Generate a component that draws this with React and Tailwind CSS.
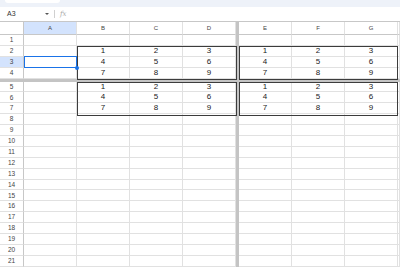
import React from "react";

const cols = ["A", "B", "C", "D", "|", "E", "F", "G", "H"];
const values = { 2: [1, 2, 3], 3: [4, 5, 6], 4: [7, 8, 9], 5: [1, 2, 3], 6: [4, 5, 6], 7: [7, 8, 9] };

function cellValue(row, col) {
  const vals = values[row];
  if (!vals) return "";
  const map = { B: 0, C: 1, D: 2, E: 0, F: 1, G: 2 };
  return map[col] === undefined ? "" : vals[map[col]];
}

function Row({ n }) {
  const selected = n === 3;
  return (
    <div className="flex h-[10.9px]">
      <div
        className={`w-[24px] shrink-0 flex items-center justify-center border-r border-b border-r-[#c7c7c7] border-b-[#e1e1e1] text-[6.5px] text-[#444] ${
          selected ? "bg-[#d3e3fd]" : "bg-white"
        }`}
      >
        {n}
      </div>
      {cols.map((c) =>
        c === "|" ? (
          <div key={c} className="w-[3px] shrink-0 bg-[#c4c4c4]" />
        ) : (
          <div
            key={c}
            className={`${c === "H" ? "flex-1" : "w-[53px] shrink-0"} flex items-center justify-center border-r border-b border-[#e1e1e1] text-[8px] text-[#222]`}
          >
            {cellValue(n, c)}
          </div>
        )
      )}
    </div>
  );
}

export default function App() {
  const topRows = [1, 2, 3, 4];
  const bottomRows = Array.from({ length: 17 }, (_, i) => i + 5);

  return (
    <div className="w-[400px] h-[271px] overflow-hidden bg-white font-['Liberation_Sans',Arial,sans-serif]">
      {/* toolbar strip */}
      <div className="h-[7px] bg-[#eef2f9] px-[5px]">
        <div className="w-[55px] h-[3px] bg-white rounded-b-[3px]" />
      </div>

      {/* formula bar */}
      <div className="h-[15px] flex items-center bg-white border-b border-[#c7c7c7]">
        <div className="w-[52px] pl-[7px] flex items-center justify-between pr-[3px]">
          <span className="text-[7px] text-[#333]">A3</span>
          <span className="w-0 h-0 border-l-[2px] border-r-[2px] border-t-[2px] border-l-transparent border-r-transparent border-t-[#555]" />
        </div>
        <div className="w-px h-[8px] bg-[#d0d0d0] ml-[2px]" />
        <span className="ml-[5px] text-[7px] italic text-[#aaa] font-['DejaVu_Serif',serif]">fx</span>
      </div>

      {/* grid */}
      <div className="relative">
        <div className="flex h-[13px]">
          <div className="w-[24px] shrink-0 border-r border-b border-[#c7c7c7] bg-white" />
          {cols.map((c) =>
            c === "|" ? (
              <div key={c} className="w-[3px] shrink-0 bg-[#c4c4c4]" />
            ) : (
              <div
                key={c}
                className={`${c === "H" ? "flex-1" : "w-[53px] shrink-0"} flex items-center justify-center border-r border-b border-r-[#e1e1e1] border-b-[#c7c7c7] text-[6px] text-[#444] ${
                  c === "A" ? "bg-[#d3e3fd]" : "bg-white"
                }`}
              >
                {c === "H" ? "" : c}
              </div>
            )
          )}
        </div>

        {topRows.map((n) => (
          <Row key={n} n={n} />
        ))}
        <div className="h-[3px] bg-[#c4c4c4]" />
        {bottomRows.map((n) => (
          <Row key={n} n={n} />
        ))}

        {/* range borders */}
        <div className="absolute left-[77px] top-[24px] w-[160px] h-[34px] border border-[#3c3c3c] pointer-events-none" />
        <div className="absolute left-[239px] top-[24px] w-[159px] h-[34px] border border-[#3c3c3c] pointer-events-none" />
        <div className="absolute left-[77px] top-[60px] w-[160px] h-[34px] border border-[#3c3c3c] pointer-events-none" />
        <div className="absolute left-[239px] top-[60px] w-[159px] h-[34px] border border-[#3c3c3c] pointer-events-none" />

        {/* selection A3 */}
        <div className="absolute left-[24px] top-[34px] w-[53px] h-[12px] border border-[#1a73e8] pointer-events-none" />
        <div className="absolute left-[75px] top-[44px] w-[4px] h-[4px] rounded-full bg-[#1a73e8] pointer-events-none" />
      </div>
    </div>
  );
}
